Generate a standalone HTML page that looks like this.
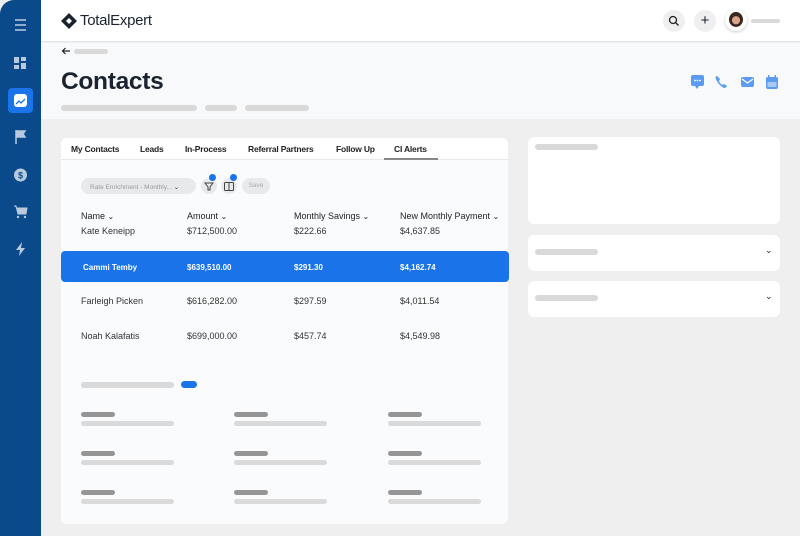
<!DOCTYPE html><html><head><style>
*{box-sizing:border-box;margin:0;padding:0}
body{width:800px;height:536px;overflow:hidden;background:#fff;font-family:"Liberation Sans",sans-serif;position:relative;color:#1b2330}
.a{position:absolute}
.sk{position:absolute;border-radius:4px;background:#d9d9d9}
.sd{position:absolute;border-radius:3px;background:#959595;height:5px}
.sl{position:absolute;border-radius:3px;background:#dadada;height:5px}
.tab{position:absolute;top:144px;font-size:8.5px;font-weight:bold;color:#222;letter-spacing:-0.2px}
.th{position:absolute;top:211px;font-size:9px;color:#222}
.td{position:absolute;font-size:9px;color:#333}
.sel{position:absolute;font-size:8px;font-weight:bold;color:#fff;top:263px}
.card{position:absolute;background:#fff;border-radius:6px}
.chev{font-size:8px}
</style></head><body>
<div class="a" style="left:0;top:0;width:800px;height:536px;background:#efefef"></div>
<div class="a" style="left:40px;top:0;width:760px;height:42px;background:#fff;border-bottom:1px solid #e4e6e9"></div>
<div class="a" style="left:40px;top:43px;width:760px;height:76px;background:#f8f9fb"></div>
<div class="a" style="left:0;top:0;width:41px;height:536px;background:#0b4a8a;border-top-left-radius:14px"></div>
<svg class="a" style="left:0;top:0" width="41" height="270">
<g stroke="#c8d6e8" stroke-width="1.4"><line x1="15" y1="20" x2="26" y2="20"/><line x1="15" y1="25" x2="26" y2="25"/><line x1="15" y1="30" x2="26" y2="30"/></g>
<g fill="#b9c9de"><rect x="14" y="57" width="5" height="6"/><rect x="21" y="57" width="5" height="4"/><rect x="14" y="65" width="5" height="4"/><rect x="21" y="63" width="5" height="6"/></g>
<rect x="8" y="88" width="25" height="25" rx="4" fill="#1a73e8"/><rect x="14" y="94" width="13" height="13" rx="3" fill="#fff"/><path d="M16 104l3-3 2 2 4-4" stroke="#1a73e8" stroke-width="1.3" fill="none"/>
<path d="M16 130v14M16 131h9l-2 3 2 3h-9" fill="#b9c9de" stroke="#b9c9de" stroke-width="1.5"/>
<circle cx="20.5" cy="175" r="6.5" fill="#b9c9de"/><text x="20.5" y="178.5" font-size="9" font-weight="bold" fill="#0b4a8a" text-anchor="middle">$</text>
<path d="M14 206h2l2 8h8l1-6h-10" fill="#b9c9de" stroke="#b9c9de"/><circle cx="18" cy="217" r="1.2" fill="#b9c9de"/><circle cx="25" cy="217" r="1.2" fill="#b9c9de"/>
<path d="M22 242l-6 8h4l-1 6 6-8h-4z" fill="#b9c9de"/>
</svg>
<svg class="a" style="left:60px;top:12px" width="18" height="18"><path d="M9 1L17 9 9 17 1 9z" fill="#1b2330"/><path d="M9 6L12 9 9 12 6 9z" fill="#fff"/></svg>
<div class="a" style="left:80px;top:12px;font-size:15px;color:#1b2330;letter-spacing:-0.3px">TotalExpert</div>
<div class="a" style="left:663px;top:10px;width:22px;height:22px;border-radius:50%;background:#efefef"></div>
<svg class="a" style="left:668px;top:15px" width="12" height="12"><circle cx="5" cy="5" r="3.5" stroke="#222" stroke-width="1.3" fill="none"/><line x1="7.5" y1="7.5" x2="10.5" y2="10.5" stroke="#222" stroke-width="1.3"/></svg>
<div class="a" style="left:694px;top:10px;width:22px;height:22px;border-radius:50%;background:#efefef;text-align:center;line-height:21px;font-size:15px">+</div>
<div class="a" style="left:725px;top:9px;width:22px;height:22px;border-radius:50%;background:#fff;box-shadow:0 1px 3px rgba(0,0,0,.2)"></div>
<div class="a" style="left:729px;top:12px;width:14px;height:15px;border-radius:50%;background:radial-gradient(circle at 50% 55%,#d9a58a 35%,#3a2620 40%)"></div>
<div class="sk" style="left:751px;top:19px;width:29px;height:4px"></div>
<svg class="a" style="left:61px;top:47px" width="10" height="8"><path d="M9 4H1.5M4.5 1L1.5 4l3 3" stroke="#222" stroke-width="1.2" fill="none"/></svg>
<div class="sk" style="left:74px;top:49px;width:34px;height:5px"></div>
<div class="a" style="left:61px;top:68px;font-size:24.5px;font-weight:bold;letter-spacing:-0.3px">Contacts</div>
<div class="sk" style="left:61px;top:105px;width:136px;height:6px"></div>
<div class="sk" style="left:205px;top:105px;width:32px;height:6px"></div>
<div class="sk" style="left:245px;top:105px;width:64px;height:6px"></div>
<svg class="a" style="left:690px;top:74px" width="92" height="16"><rect x="1" y="1" width="13" height="11" rx="2" fill="#5c9cf0"/><path d="M5 12l2 3 2-3" fill="#5c9cf0"/><g fill="#fff"><circle cx="5" cy="6.5" r=".9"/><circle cx="7.5" cy="6.5" r=".9"/><circle cx="10" cy="6.5" r=".9"/></g>
<path d="M27 2c-1 0-2 1-1 3 1 3 4 7 8 9 1 0 3-1 3-2l-3-2-2 1c-1-1-3-3-3-4l1-2z" fill="#5c9cf0"/>
<rect x="51" y="3" width="13" height="10" rx="2" fill="#5c9cf0"/><path d="M52 5l5.5 4 5.5-4" stroke="#fff" stroke-width="1.2" fill="none"/>
<rect x="76" y="3" width="12" height="12" rx="2" fill="#5c9cf0"/><rect x="78" y="1" width="1.5" height="4" fill="#5c9cf0"/><rect x="84.5" y="1" width="1.5" height="4" fill="#5c9cf0"/><rect x="77.5" y="8" width="9" height="5" fill="#a9c9f7"/></svg>
<div class="a" style="left:61px;top:138px;width:447px;height:386px;background:#fafbfc;border-radius:6px"></div>
<div class="a" style="left:61px;top:138px;width:447px;height:22px;background:#fff;border-radius:6px 6px 0 0;border-bottom:1px solid #e6e8eb"></div>
<div class="tab" style="left:71px">My Contacts</div><div class="tab" style="left:140px">Leads</div><div class="tab" style="left:185px">In-Process</div><div class="tab" style="left:248px">Referral Partners</div><div class="tab" style="left:336px">Follow Up</div><div class="tab" style="left:394px">CI Alerts</div>
<div class="a" style="left:384px;top:158px;width:54px;height:2px;background:#888"></div>
<div class="a" style="left:81px;top:178px;width:115px;height:16px;border-radius:8px;background:#e8e9eb;font-size:6.5px;color:#999;padding:5px 0 0 9px">Rate Enrichment - Monthly... <span style="color:#333">⌄</span></div>
<div class="a" style="left:201px;top:178px;width:16px;height:16px;border-radius:50%;background:#e8e9eb"></div>
<svg class="a" style="left:204px;top:182px" width="10" height="9"><path d="M1 1h8L6 5v3H4V5z" fill="none" stroke="#444"/></svg>
<div class="a" style="left:221px;top:178px;width:16px;height:16px;border-radius:50%;background:#e8e9eb"></div>
<svg class="a" style="left:224px;top:182px" width="10" height="9"><rect x=".5" y=".5" width="9" height="8" rx="1" fill="none" stroke="#444"/><line x1="5" y1="1" x2="5" y2="8" stroke="#444"/></svg>
<div class="a" style="left:209px;top:174px;width:7px;height:7px;border-radius:50%;background:#1a73e8"></div>
<div class="a" style="left:230px;top:174px;width:7px;height:7px;border-radius:50%;background:#1a73e8"></div>
<div class="a" style="left:242px;top:178px;width:28px;height:16px;border-radius:8px;background:#e8e9eb;font-size:6.5px;color:#aaa;padding-top:4px;text-align:center">Save</div>
<div class="th" style="left:81px">Name <span class="chev">⌄</span></div><div class="th" style="left:187px">Amount <span class="chev">⌄</span></div><div class="th" style="left:294px">Monthly Savings <span class="chev">⌄</span></div><div class="th" style="left:400px">New Monthly Payment <span class="chev">⌄</span></div>
<div class="td" style="left:81px;top:226px">Kate Keneipp</div><div class="td" style="left:187px;top:226px">$712,500.00</div><div class="td" style="left:294px;top:226px">$222.66</div><div class="td" style="left:400px;top:226px">$4,637.85</div>
<div class="a" style="left:61px;top:251px;width:448px;height:31px;background:#1a73e8;border-radius:4px"></div>
<div class="sel" style="left:83px">Cammi Temby</div><div class="sel" style="left:187px">$639,510.00</div><div class="sel" style="left:294px">$291.30</div><div class="sel" style="left:400px">$4,162.74</div>
<div class="td" style="left:81px;top:296px">Farleigh Picken</div><div class="td" style="left:187px;top:296px">$616,282.00</div><div class="td" style="left:294px;top:296px">$297.59</div><div class="td" style="left:400px;top:296px">$4,011.54</div>
<div class="td" style="left:81px;top:331px">Noah Kalafatis</div><div class="td" style="left:187px;top:331px">$699,000.00</div><div class="td" style="left:294px;top:331px">$457.74</div><div class="td" style="left:400px;top:331px">$4,549.98</div>
<div class="sl" style="left:81px;top:382px;width:93px;height:6px"></div>
<div class="a" style="left:181px;top:381px;width:16px;height:7px;border-radius:4px;background:#1a73e8"></div>
<div class="sd" style="left:81px;top:412px;width:34px"></div><div class="sl" style="left:81px;top:421px;width:93px"></div>
<div class="sd" style="left:234px;top:412px;width:34px"></div><div class="sl" style="left:234px;top:421px;width:93px"></div>
<div class="sd" style="left:388px;top:412px;width:34px"></div><div class="sl" style="left:388px;top:421px;width:93px"></div>
<div class="sd" style="left:81px;top:451px;width:34px"></div><div class="sl" style="left:81px;top:460px;width:93px"></div>
<div class="sd" style="left:234px;top:451px;width:34px"></div><div class="sl" style="left:234px;top:460px;width:93px"></div>
<div class="sd" style="left:388px;top:451px;width:34px"></div><div class="sl" style="left:388px;top:460px;width:93px"></div>
<div class="sd" style="left:81px;top:490px;width:34px"></div><div class="sl" style="left:81px;top:499px;width:93px"></div>
<div class="sd" style="left:234px;top:490px;width:34px"></div><div class="sl" style="left:234px;top:499px;width:93px"></div>
<div class="sd" style="left:388px;top:490px;width:34px"></div><div class="sl" style="left:388px;top:499px;width:93px"></div>
<div class="card" style="left:528px;top:137px;width:252px;height:87px"></div>
<div class="sk" style="left:535px;top:144px;width:63px;height:6px"></div>
<div class="card" style="left:528px;top:235px;width:252px;height:36px"></div>
<div class="sk" style="left:535px;top:249px;width:63px;height:6px"></div>
<div class="a" style="left:765px;top:245px;font-size:9px">⌄</div>
<div class="card" style="left:528px;top:281px;width:252px;height:36px"></div>
<div class="sk" style="left:535px;top:295px;width:63px;height:6px"></div>
<div class="a" style="left:765px;top:291px;font-size:9px">⌄</div>
</body></html>
